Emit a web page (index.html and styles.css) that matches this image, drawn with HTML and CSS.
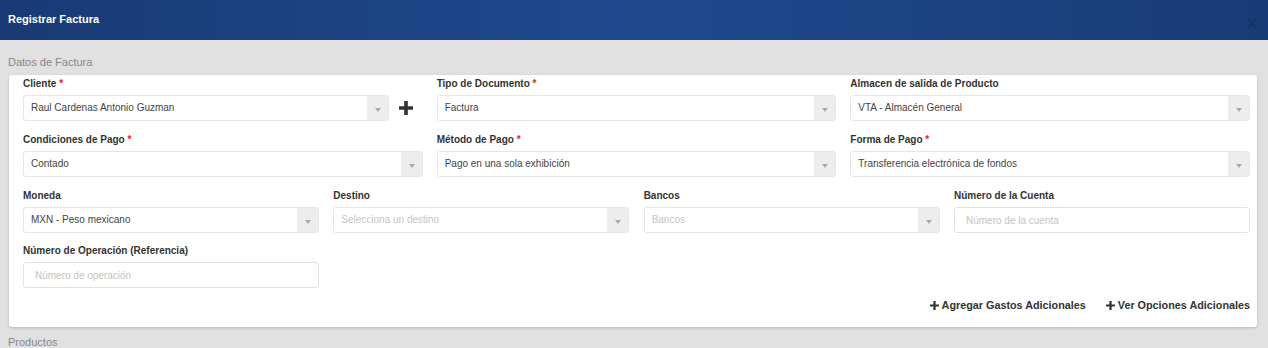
FILE: index.html
```html
<!DOCTYPE html>
<html lang="es">
<head>
  <meta charset="UTF-8">
  <meta name="viewport" content="width=device-width, initial-scale=1.0">
  <link rel="stylesheet" href="styles.css">
</head>
<body>

  <div class="modal-header">
    <span class="modal-title">Registrar Factura</span>
    <button class="close-button" aria-label="Cerrar">
      <svg width="11" height="11" viewBox="0 0 11 11"><path d="M1 1L10 10M10 1L1 10" stroke="#163466" stroke-width="2.2"/></svg>
    </button>
  </div>

  <div class="modal-body">

    <div class="section-title">Datos de Factura</div>

    <div class="panel">

      <div class="row row-3">
        <div class="form-group">
          <label class="form-label">Cliente <span class="required">*</span></label>
          <div class="with-action">
            <div class="select"><span class="select-text">Raul Cardenas Antonio Guzman</span><span class="select-arrow"></span></div>
            <button class="add-button" aria-label="Agregar cliente">
              <svg width="14" height="14" viewBox="0 0 14 14"><path d="M7 0V14M0 7H14" stroke="#333" stroke-width="3.6"/></svg>
            </button>
          </div>
        </div>
        <div class="form-group">
          <label class="form-label">Tipo de Documento <span class="required">*</span></label>
          <div class="select"><span class="select-text">Factura</span><span class="select-arrow"></span></div>
        </div>
        <div class="form-group">
          <label class="form-label">Almacen de salida de Producto</label>
          <div class="select"><span class="select-text">VTA - Almacén General</span><span class="select-arrow"></span></div>
        </div>
      </div>

      <div class="row row-3">
        <div class="form-group">
          <label class="form-label">Condiciones de Pago <span class="required">*</span></label>
          <div class="select"><span class="select-text">Contado</span><span class="select-arrow"></span></div>
        </div>
        <div class="form-group">
          <label class="form-label">Método de Pago <span class="required">*</span></label>
          <div class="select"><span class="select-text">Pago en una sola exhibición</span><span class="select-arrow"></span></div>
        </div>
        <div class="form-group">
          <label class="form-label">Forma de Pago <span class="required">*</span></label>
          <div class="select"><span class="select-text">Transferencia electrónica de fondos</span><span class="select-arrow"></span></div>
        </div>
      </div>

      <div class="row row-4">
        <div class="form-group">
          <label class="form-label">Moneda</label>
          <div class="select"><span class="select-text">MXN - Peso mexicano</span><span class="select-arrow"></span></div>
        </div>
        <div class="form-group">
          <label class="form-label">Destino</label>
          <div class="select"><span class="select-text placeholder">Selecciona un destino</span><span class="select-arrow"></span></div>
        </div>
        <div class="form-group">
          <label class="form-label">Bancos</label>
          <div class="select"><span class="select-text placeholder">Bancos</span><span class="select-arrow"></span></div>
        </div>
        <div class="form-group">
          <label class="form-label">Número de la Cuenta</label>
          <input class="text-input" type="text" placeholder="Número de la cuenta">
        </div>
      </div>

      <div class="row row-4">
        <div class="form-group">
          <label class="form-label">Número de Operación (Referencia)</label>
          <input class="text-input" type="text" placeholder="Número de operación">
        </div>
      </div>

      <div class="panel-actions">
        <a class="action-link" href="#">
          <svg width="9" height="9" viewBox="0 0 9 9"><path d="M4.5 0V9M0 4.5H9" stroke="#333" stroke-width="2.2"/></svg>
          Agregar Gastos Adicionales
        </a>
        <a class="action-link" href="#">
          <svg width="9" height="9" viewBox="0 0 9 9"><path d="M4.5 0V9M0 4.5H9" stroke="#333" stroke-width="2.2"/></svg>
          Ver Opciones Adicionales
        </a>
      </div>

    </div>

    <div class="section-title section-next">Productos</div>

  </div>

</body>
</html>
```

FILE: styles.css
```css
body {
  margin: 0;
  background-color: #e1e1e1;
  font-family: "Liberation Sans", Arial, sans-serif;
  color: #333;
  overflow: hidden;
}


.modal-header {
  height: 40px;
  display: flex;
  align-items: center;
  justify-content: space-between;
  padding: 0 8px;
  background: linear-gradient(90deg, #193a74 0%, #1f4a8d 50%, #193b75 100%);
}

.modal-title {
  color: white;
  font-size: 11px;
  font-weight: bold;
  padding-bottom: 3px;
}

.close-button {
  background: none;
  border: none;
  padding: 0;
  margin-right: 2px;
  margin-top: 4px;
  width: 11px;
  height: 11px;
  opacity: 0.9;
}


.modal-body {
  padding: 16px 11px 0 9px;
}

.section-title {
  font-size: 11px;
  color: #888;
  margin: 0 0 6px -1px;
  line-height: 13px;
}

.section-next {
  margin-top: 9px;
}


.panel {
  background-color: white;
  border-radius: 3px;
  box-shadow: 0 1px 3px rgba(0, 0, 0, 0.18);
  padding: 3px 7px 16px 14px;
}


.row {
  display: grid;
  column-gap: 14px;
}

.row-3 {
  grid-template-columns: repeat(3, 1fr);
}

.row-4 {
  grid-template-columns: repeat(4, 1fr);
  column-gap: 14.3px;
}

.form-group {
  margin-bottom: 13px;
  min-width: 0;
}

.row-3 + .row-4 .form-group {
  margin-bottom: 12px;
}

.form-label {
  display: block;
  font-size: 10px;
  font-weight: bold;
  line-height: 12px;
  margin-bottom: 5px;
  color: #333;
}

.row-4 .form-label {
  margin-bottom: 5px;
}

.required {
  color: #e02020;
}


.with-action {
  display: flex;
  align-items: center;
}

.with-action .select {
  flex: 1;
}

.add-button {
  width: 34px;
  height: 26px;
  background: none;
  border: none;
  padding: 0;
  display: flex;
  align-items: center;
  justify-content: center;
  flex-shrink: 0;
}


.select {
  display: flex;
  height: 26px;
  box-sizing: border-box;
  border: 1px solid #e6e6e6;
  border-radius: 3px;
  overflow: hidden;
  background-color: white;
}

.select-text {
  flex: 1;
  font-size: 10px;
  line-height: 24px;
  padding-left: 7px;
  color: #444;
  white-space: nowrap;
  overflow: hidden;
}

.select-text.placeholder {
  color: #c4c4c4;
}

.select-arrow {
  width: 21px;
  background-color: #ededed;
  position: relative;
}

.select-arrow::after {
  content: '';
  position: absolute;
  left: 8px;
  top: 12px;
  border-left: 3px solid transparent;
  border-right: 3px solid transparent;
  border-top: 4px solid #a8a8a8;
}


.text-input {
  display: block;
  width: 100%;
  height: 26px;
  box-sizing: border-box;
  border: 1px solid #e3e3e3;
  border-radius: 3px;
  padding: 0 11px;
  font-family: inherit;
  font-size: 10px;
  color: #444;
}

.text-input::placeholder {
  color: #c4c4c4;
}


.panel-actions {
  display: flex;
  justify-content: flex-end;
  gap: 20px;
  margin-top: -2px;
}

.action-link {
  display: flex;
  align-items: center;
  gap: 3px;
  font-size: 10.8px;
  font-weight: bold;
  line-height: 12px;
  color: #333;
  text-decoration: none;
}
```
